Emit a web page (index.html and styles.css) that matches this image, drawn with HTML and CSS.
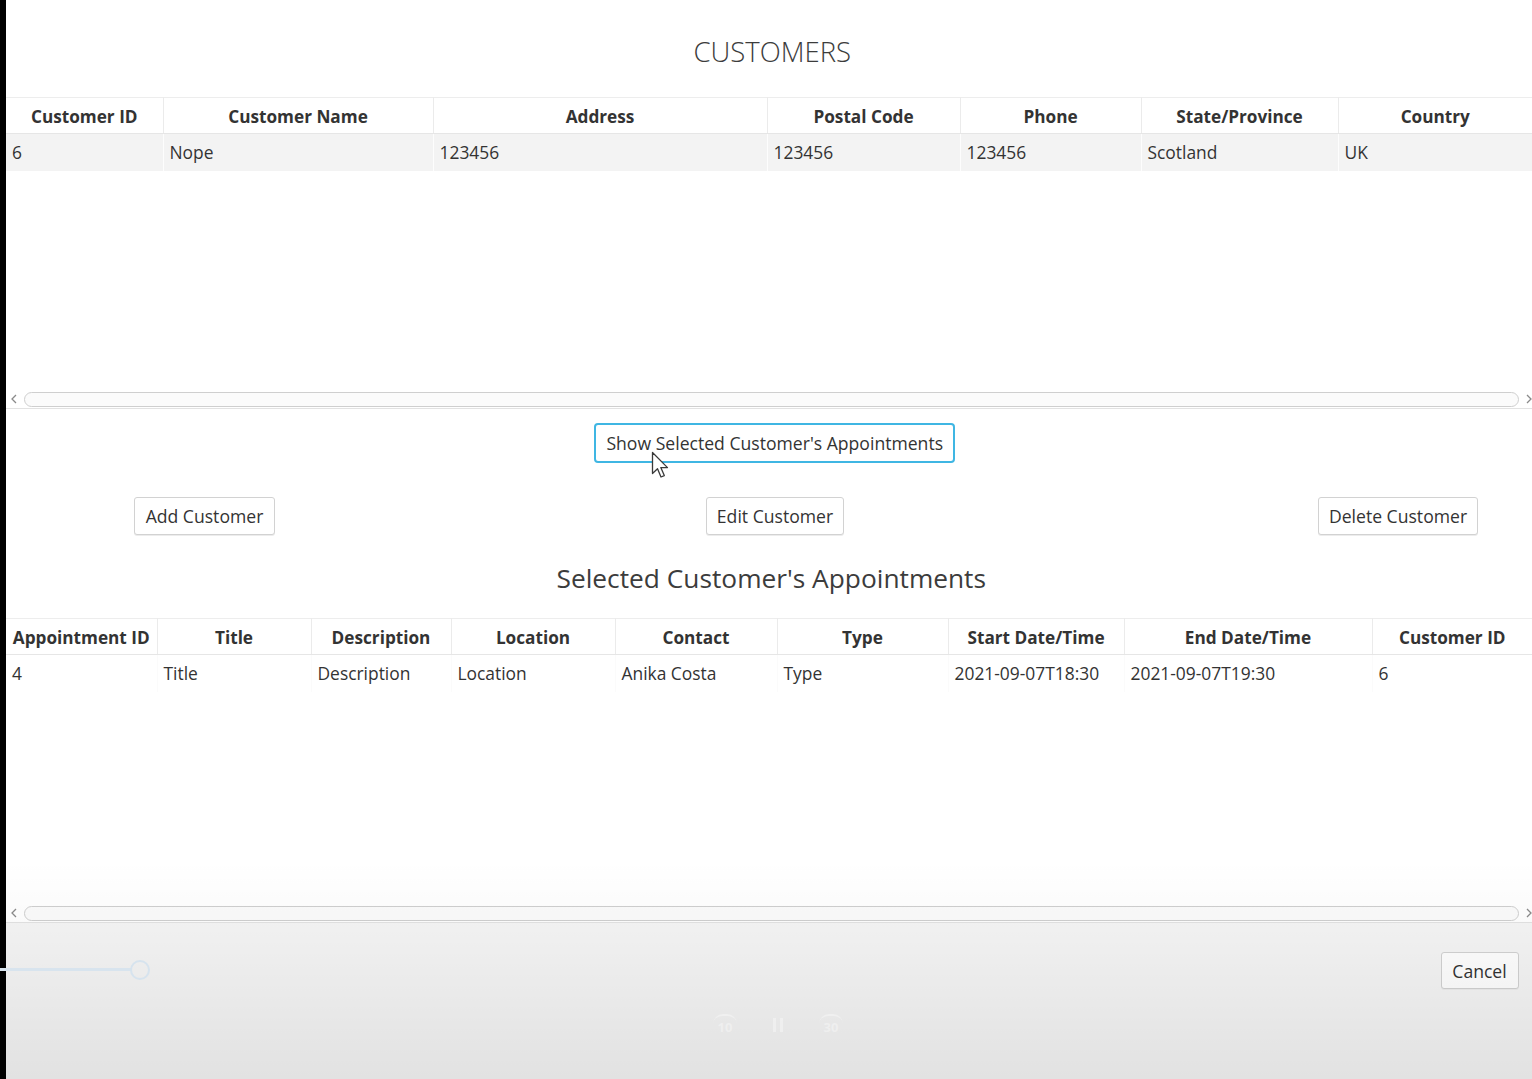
FILE: index.html
```html
<!DOCTYPE html>
<html lang="en">
<head>
<meta charset="utf-8">
<title>Customers</title>
<link rel="stylesheet" href="styles.css">
</head>
<body>
<div class="screen">
  <div class="edge"></div>
  <main class="app">
    <h1 class="title">CUSTOMERS</h1>

    <section class="tableview tv-customers">
      <table class="grid">
        <colgroup>
          <col style="width:157px"><col style="width:270px"><col style="width:334px"><col style="width:193px"><col style="width:181px"><col style="width:197px"><col style="width:194px">
        </colgroup>
        <thead>
          <tr><th>Customer ID</th><th>Customer Name</th><th>Address</th><th>Postal Code</th><th>Phone</th><th>State/Province</th><th>Country</th></tr>
        </thead>
        <tbody>
          <tr class="row-sel"><td>6</td><td>Nope</td><td>123456</td><td>123456</td><td>123456</td><td>Scotland</td><td>UK</td></tr>
        </tbody>
      </table>
      <div class="filler"></div>
      <div class="hscroll">
        <svg class="arr" width="8" height="10" viewBox="0 0 8 10"><polyline points="6,1 2,5 6,9" fill="none" stroke="#8a8a8a" stroke-width="1.3"/></svg>
        <div class="track"></div>
        <svg class="arr" width="8" height="10" viewBox="0 0 8 10"><polyline points="2,1 6,5 2,9" fill="none" stroke="#8a8a8a" stroke-width="1.3"/></svg>
      </div>
    </section>

    <div class="show-row">
      <button class="btn focused">Show Selected Customer's Appointments</button>
    </div>

    <div class="btn-row">
      <button class="btn b-add">Add Customer</button>
      <button class="btn b-edit">Edit Customer</button>
      <button class="btn b-del">Delete Customer</button>
    </div>

    <h2 class="subtitle">Selected Customer's Appointments</h2>

    <section class="tableview tv-appts">
      <table class="grid">
        <colgroup>
          <col style="width:151px"><col style="width:154px"><col style="width:140px"><col style="width:164px"><col style="width:162px"><col style="width:171px"><col style="width:176px"><col style="width:248px"><col style="width:160px">
        </colgroup>
        <thead>
          <tr><th>Appointment ID</th><th>Title</th><th>Description</th><th>Location</th><th>Contact</th><th>Type</th><th>Start Date/Time</th><th>End Date/Time</th><th>Customer ID</th></tr>
        </thead>
        <tbody>
          <tr><td>4</td><td>Title</td><td>Description</td><td>Location</td><td>Anika Costa</td><td>Type</td><td>2021-09-07T18:30</td><td>2021-09-07T19:30</td><td>6</td></tr>
        </tbody>
      </table>
      <div class="filler"></div>
      <div class="hscroll">
        <svg class="arr" width="8" height="10" viewBox="0 0 8 10"><polyline points="6,1 2,5 6,9" fill="none" stroke="#8a8a8a" stroke-width="1.3"/></svg>
        <div class="track"></div>
        <svg class="arr" width="8" height="10" viewBox="0 0 8 10"><polyline points="2,1 6,5 2,9" fill="none" stroke="#8a8a8a" stroke-width="1.3"/></svg>
      </div>
    </section>

    <div class="footer">
      <button class="btn b-cancel">Cancel</button>
    </div>
  </main>

  <div class="player">
    <div class="scrub">
      <div class="scrub-line"></div>
      <div class="scrub-knob"></div>
    </div>
    <div class="controls">
      <span class="ctl">10</span>
      <span class="pause"><i></i><i></i></span>
      <span class="ctl">30</span>
    </div>
  </div>

  <svg class="cursor" width="20" height="30" viewBox="0 0 20 30">
    <path d="M1.5 1.5 L1.5 22.5 L6.5 17.8 L10 26 L13.3 24.6 L9.8 16.6 L16.5 16.6 Z" fill="#ffffff" stroke="#3a3a3a" stroke-width="1.3" stroke-linejoin="round"/>
  </svg>
</div>
</body>
</html>
```

FILE: styles.css
```css
* { box-sizing: border-box; }
html, body { margin: 0; padding: 0; }
body {
  width: 1532px;
  height: 1079px;
  overflow: hidden;
  font-family: "Open Sans", "Noto Sans", sans-serif;
  color: #333333;
  background: #ffffff;
}
.screen {
  position: relative;
  display: flex;
  width: 1532px;
  height: 1079px;
}
.edge {
  width: 6px;
  flex: 0 0 6px;
  background: #000000;
}
.app {
  flex: 1;
  display: flex;
  flex-direction: column;
  background: #ffffff;
}
.title {
  margin: 0 0 25px 0;
  padding-top: 32px;
  padding-left: 6px;
  line-height: 40px;
  height: 72px;
  text-align: center;
  font-weight: 300;
  font-size: 27.5px;
  color: #3c3c3c;
}
.tableview {
  display: flex;
  flex-direction: column;
  border-bottom: 1px solid #e2e2e2;
}
.tv-customers { height: 312px; }
.tv-appts { height: 305px; }
.grid {
  border-collapse: collapse;
  table-layout: fixed;
  width: 1526px;
  font-size: 17.4px;
}
.grid th {
  height: 36px;
  font-weight: 700;
  font-size: 17.2px;
  text-align: center;
  white-space: nowrap;
  overflow: hidden;
  padding: 2px 2px 0 2px;
  border-top: 1px solid #ededed;
  border-bottom: 1px solid #e6e6e6;
  border-right: 1px solid #ebebeb;
  background: #ffffff;
  color: #333;
}
.grid th:last-child { border-right: none; }
.grid td {
  height: 37px;
  padding: 0 6px 1px 6px;
  text-align: left;
  white-space: nowrap;
  overflow: hidden;
  border-right: 1px solid #fbfbfb;
  color: #333;
}
.row-sel td { background: #f3f3f3; border-right-color: #fdfdfd; }
.filler { flex: 1; }
.hscroll {
  height: 18px;
  display: flex;
  align-items: flex-end;
  gap: 6px;
  padding: 0 0 1px 4px;
}
.arr { flex: 0 0 8px; margin-bottom: 3px; }
.track {
  flex: 1;
  height: 15px;
  border: 1px solid #cfcfcf;
  border-radius: 8px;
  background: #fbfbfb;
}
.btn {
  font-family: inherit;
  font-size: 17.6px;
  color: #333;
  background: #ffffff;
  border: 1px solid #d2d2d2;
  border-radius: 3px;
  padding: 0 6px;
  height: 38px;
  box-shadow: 0 1px 0 #ececec;
  cursor: default;
  white-space: nowrap;
}
.show-row {
  display: flex;
  justify-content: center;
  padding-top: 14px;
  height: 88px;
  padding-left: 11px;
}
.btn.focused {
  height: 40px;
  width: 361px;
  border: 2px solid #3fb6e3;
  border-radius: 4px;
  box-shadow: none;
}
.btn-row {
  display: flex;
  align-items: flex-start;
  height: 38px;
}
.b-add { margin-left: 128px; width: 141px; }
.b-edit { margin-left: 431px; width: 138px; }
.b-del { margin-left: 474px; width: 160px; }
.subtitle {
  margin: 23px 0 20px 0;
  line-height: 40px;
  height: 40px;
  padding-left: 4px;
  text-align: center;
  font-weight: 400;
  font-size: 26.3px;
  color: #3c3c3c;
}
.footer {
  flex: 1;
  display: flex;
  justify-content: flex-end;
  align-items: flex-start;
  padding: 29px 14px 0 0;
  background: #f5f5f5;
}
.b-cancel { width: 78px; height: 37px; padding: 0; }

/* video overlay */
.player {
  position: absolute;
  left: 0;
  right: 0;
  bottom: 0;
  height: 220px;
  background: linear-gradient(to bottom, rgba(0,0,0,0) 0%, rgba(0,0,0,0.02) 30%, rgba(0,0,0,0.08) 100%);
  pointer-events: none;
}
.scrub {
  position: absolute;
  left: 0;
  top: 100px;
  width: 160px;
  height: 20px;
}
.scrub-line {
  position: absolute;
  left: 0;
  top: 9px;
  width: 132px;
  height: 3px;
  background: #d8e4ee;
}
.scrub-knob {
  position: absolute;
  left: 130px;
  top: 1px;
  width: 20px;
  height: 20px;
  border: 2px solid #d6e3ee;
  border-radius: 50%;
}
.controls {
  position: absolute;
  top: 155px;
  left: 713px;
  display: flex;
  gap: 36px;
  align-items: center;
  color: rgba(255,255,255,0.35);
  font-size: 13px;
  font-weight: 700;
}
.ctl {
  width: 24px;
  text-align: center;
  border-top: 2px solid rgba(255,255,255,0.35);
  border-radius: 10px 10px 0 0;
  padding-top: 2px;
}
.pause { display: flex; gap: 4px; }
.pause i { display: block; width: 3px; height: 14px; background: rgba(255,255,255,0.35); }
.cursor {
  position: absolute;
  left: 651px;
  top: 451px;
}
```
